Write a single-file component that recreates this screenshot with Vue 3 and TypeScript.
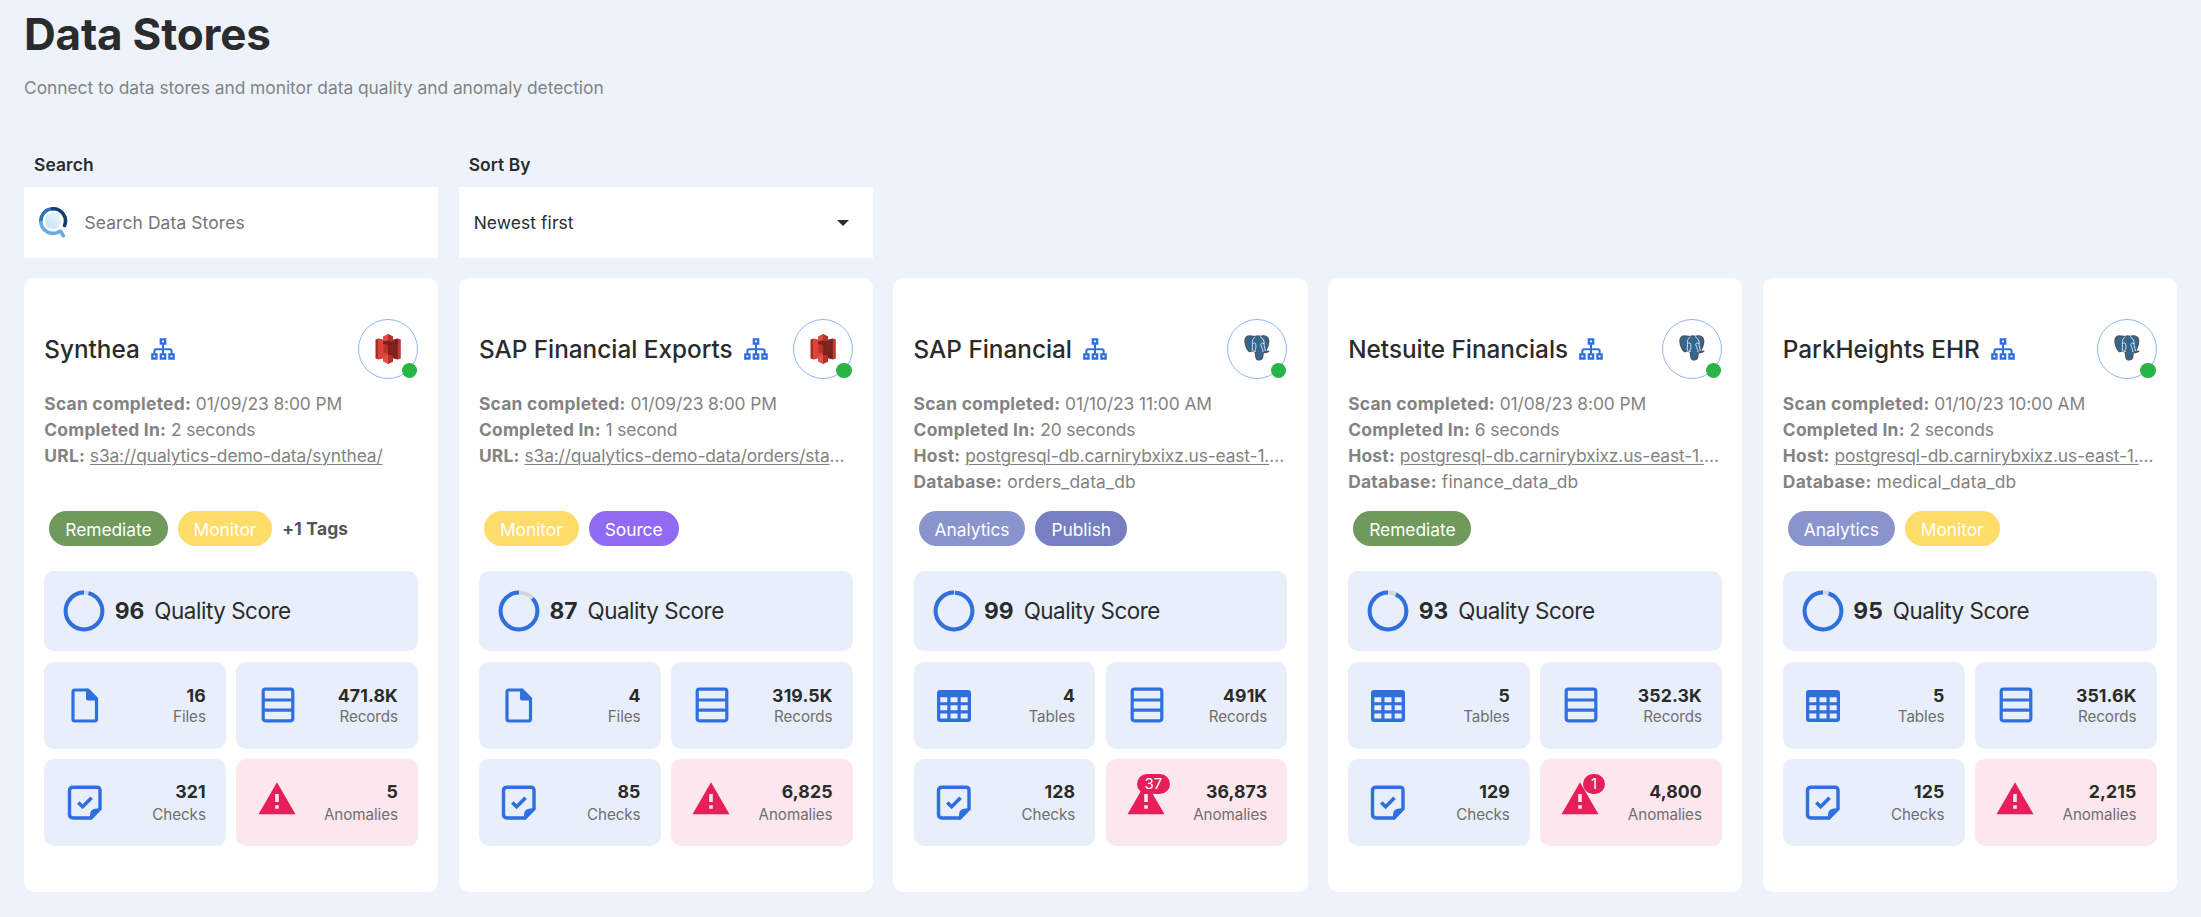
<script setup lang="ts">
interface Tag { label: string; color: string }
interface Store {
  name: string
  kind: 's3' | 'pg'
  scanned: string
  took: string
  address: string
  database?: string
  tags: Tag[]
  more?: string
  score: number
  units: string
  records: string
  checks: string
  anomalies: string
  badge?: string
}

const remediate: Tag = { label: 'Remediate', color: '#6f9a5c' }
const monitor: Tag = { label: 'Monitor', color: '#fddc69' }
const source: Tag = { label: 'Source', color: '#916af3' }
const analytics: Tag = { label: 'Analytics', color: '#8a94cc' }
const publish: Tag = { label: 'Publish', color: '#757fc2' }

const host = 'postgresql-db.carnirybxixz.us-east-1.rds.amazonaws.com'

const stores: Store[] = [
  { name: 'Synthea', kind: 's3', scanned: '01/09/23 8:00 PM', took: '2 seconds', address: 's3a://qualytics-demo-data/synthea/', tags: [remediate, monitor], more: '+1 Tags', score: 96, units: '16', records: '471.8K', checks: '321', anomalies: '5' },
  { name: 'SAP Financial Exports', kind: 's3', scanned: '01/09/23 8:00 PM', took: '1 second', address: 's3a://qualytics-demo-data/orders/staging/', tags: [monitor, source], score: 87, units: '4', records: '319.5K', checks: '85', anomalies: '6,825' },
  { name: 'SAP Financial', kind: 'pg', scanned: '01/10/23 11:00 AM', took: '20 seconds', address: host, database: 'orders_data_db', tags: [analytics, publish], score: 99, units: '4', records: '491K', checks: '128', anomalies: '36,873', badge: '37' },
  { name: 'Netsuite Financials', kind: 'pg', scanned: '01/08/23 8:00 PM', took: '6 seconds', address: host, database: 'finance_data_db', tags: [remediate], score: 93, units: '5', records: '352.3K', checks: '129', anomalies: '4,800', badge: '1' },
  { name: 'ParkHeights EHR', kind: 'pg', scanned: '01/10/23 10:00 AM', took: '2 seconds', address: host, database: 'medical_data_db', tags: [analytics, monitor], score: 95, units: '5', records: '351.6K', checks: '125', anomalies: '2,215' },
]
</script>

<template>
  <main class="page">
    <h1>Data Stores</h1>
    <p class="lead">Connect to data stores and monitor data quality and anomaly detection</p>

    <section class="filters">
      <div class="field">
        <label>Search</label>
        <div class="box">
          <svg class="q" viewBox="0 0 30 32" fill="none">
            <defs>
              <linearGradient id="lens" x1="0" y1="1" x2="1" y2="0">
                <stop offset="0" stop-color="#c3e0f7" /><stop offset="1" stop-color="#edf6fd" />
              </linearGradient>
            </defs>
            <circle cx="14" cy="14" r="8.2" fill="url(#lens)" />
            <path d="M1.9 15.5A12.2 12.2 0 0 1 13.5 1.8" stroke="#2d74b5" stroke-width="3.6" />
            <path d="M13.5 1.8A12.2 12.2 0 0 1 25.6 18.5" stroke="#103f6b" stroke-width="3.6" stroke-linecap="round" />
            <path d="M1.9 15.5A12.2 12.2 0 0 0 19.5 25L21.5 24.2L24.3 28.8" stroke="#68abe3" stroke-width="3.6" stroke-linecap="round" stroke-linejoin="round" />
          </svg>
          <span class="placeholder">Search Data Stores</span>
        </div>
      </div>
      <div class="field">
        <label>Sort By</label>
        <div class="box select">
          <span>Newest first</span>
          <svg class="caret" viewBox="0 0 12 6"><path d="M0 0h12L6 6z" fill="#2b2b2b" /></svg>
        </div>
      </div>
    </section>

    <section class="cards">
      <article v-for="s in stores" :key="s.name" class="card">
        <header>
          <h2>{{ s.name }}</h2>
          <svg class="tree" viewBox="0 0 24 22" fill="none" stroke="#2f6fde" stroke-width="2.3">
            <path d="M9.800 1.300h4.400v4.200H9.800zM1.300 16.3h4.200v4.200H1.300zM9.800 16.3h4.400v4.200H9.800zM18.400 16.3h4.200v4.200h-4.200z" />
            <path d="M12 5.500v10.700M3.400 16.2v-3.400q0-1.600 1.600-1.600h14q1.600 0 1.600 1.600v3.400" stroke-width="2" />
          </svg>
          <div class="avatar">
            <svg v-if="s.kind === 's3'" class="s3" viewBox="0 0 26 30">
              <path d="M.5 5.600L3.500 4.600L13 7v16l-9.500 2.400-3-1z" fill="#a52f28" />
              <path d="M3 4.700L13 7.500v15L3 25.300z" fill="#dc443a" />
              <path d="M25.500 5.600l-3-1L13 7v16l9.500 2.400 3-1z" fill="#7c231d" />
              <path d="M22.800 4.700l2.700.9v18.800l-2.700.9z" fill="#c23a32" />
              <path d="M13 0l5 2.500v4.600L13 8.500 8 7.100V2.500z" fill="#e04a40" />
              <path d="M13 0l5 2.500v4.600l-5 1.400z" fill="#b5322c" />
              <path d="M8 7.500l5-1 5 1v2.700l-5 .8-5-.8z" fill="#7c231d" />
              <path d="M8.500 11.500l4.500-.7 4.500.7v7l-4.500.7-4.500-.7z" fill="#b5322c" />
              <path d="M13 10.800l4.500.7v7l-4.500.7z" fill="#7c231d" />
              <path d="M13 21l5 1v5.500L13 30l-5-2.500V22z" fill="#e0524a" />
              <path d="M13 21l5 1v5.500L13 30z" fill="#b5322c" />
            </svg>
            <svg v-else class="pg" viewBox="0 0 26 26" stroke-linejoin="round" stroke-linecap="round">
              <path d="M7 1.200C3 .5.900 2.300 1 6c.1 3.500 2 9.200 4.200 10.500 1.100.6 2-.3 2.800-1.200.8 1.200 1.900 1.600 3.400 1.500.3 2.700 0 5.300 1.100 7 1 1.500 4.500 1.600 5.700-.3.700-1.300.8-4.300 1-6.300 2 .5 4.300 0 5.500-1-1 .2-2.300.3-3-.4C24.500 11 25.600 5 23.500 2.500 21.500.4 18 .6 16.300 1.400c-2-.7-3.900-.6-5.300.2C9.800 1.100 8.300 1.200 7 1.200z" fill="#336791" stroke="#50555a" stroke-width="1.4" />
              <path d="M11 2C8 4 8.300 7.500 8.500 9.500c.2 2-.5 3.500-.3 5.500M8.600 8.500c1.500-1.200 3.300-.6 3.200 1.200-.1 2 .8 3.500-1 5.800M16.300 1.700c3 2 4.200 4.500 3.800 7.300-.2 2 .7 3.500 1.300 6.700M19.800 8.500c-1.500-1-3.300-.4-3 1.300.3 1.800 1.800 3.300 2.200 7M8.500 15.300q1 1.600 3 1.200" fill="none" stroke="#d9e3ec" stroke-width="1" />
            </svg>
            <i class="dot"></i>
          </div>
        </header>

        <div class="info">
          <p><b>Scan completed:</b> {{ s.scanned }}</p>
          <p><b>Completed In:</b> {{ s.took }}</p>
          <p><b>{{ s.database ? 'Host:' : 'URL:' }}</b>&nbsp;<u>{{ s.address }}</u></p>
          <p v-if="s.database" class="db"><b>Database:</b> {{ s.database }}</p>
        </div>

        <div class="tags">
          <span v-for="t in s.tags" :key="t.label" class="tag" :style="{ background: t.color }">{{ t.label }}</span>
          <strong v-if="s.more">{{ s.more }}</strong>
        </div>

        <div class="quality">
          <svg class="ring" viewBox="0 0 42 42" fill="none" stroke-width="4">
            <circle cx="21" cy="21" r="18.4" stroke="#d3d6db" />
            <circle cx="21" cy="21" r="18.4" stroke="#2f6fde" pathLength="100" :stroke-dasharray="`${s.score} 100`" transform="matrix(0 -1 -1 0 42 42)" />
          </svg>
          <b>{{ s.score }}</b><span>Quality Score</span>
        </div>

        <div class="tiles">
          <div class="tile">
            <svg v-if="s.kind === 's3'" class="icon" viewBox="0 0 40 40">
              <path d="M9.500 4h13l9 9v20q0 2-2 2H10q-2 0-2-2V6q0-2 1.500-2z" fill="none" stroke="#2f6fde" stroke-width="3.2" />
              <path d="M21 2.800h3L33 12V14.500H23q-2 0-2-2z" fill="#2f6fde" />
            </svg>
            <svg v-else class="icon" viewBox="0 0 40 40">
              <path fill="#2f6fde" fill-rule="evenodd" d="M6 4h28q3 0 3 3v26q0 3-3 3H6q-3 0-3-3V7q0-3 3-3zM6.300 11.300v5h7v-5zM16.500 11.300v5h7v-5zM26.700 11.300v5h7v-5zM6.300 19.300v5h7v-5zM16.500 19.300v5h7v-5zM26.700 19.300v5h7v-5zM6.300 27.500v5h7v-5zM16.500 27.500v5h7v-5zM26.700 27.500v5h7v-5z" />
            </svg>
            <div class="figure"><b>{{ s.units }}</b><span>{{ s.kind === 's3' ? 'Files' : 'Tables' }}</span></div>
          </div>
          <div class="tile">
            <svg class="icon" viewBox="0 0 40 40" fill="none" stroke="#2f6fde" stroke-width="3.2">
              <rect x="6.2" y="3.2" width="29.6" height="31.6" rx="2.2" />
              <path d="M6 14h30M6 24.200h30" />
            </svg>
            <div class="figure"><b>{{ s.records }}</b><span>Records</span></div>
          </div>
          <div class="tile low">
            <svg class="icon" viewBox="0 0 40 40" fill="none" stroke="#2f6fde" stroke-width="3.4">
              <path d="M8 5.300h24q3 0 3 3v18.500L26 36H8q-3.500 0-3.500-3.500V8.500Q4.500 5.300 8 5.300z" />
              <path d="M36.700 26.500L26.500 37.500h-1.500v-4.500q0-6.500 6.500-6.500z" fill="#2f6fde" stroke="none" />
              <path d="M13.300 20.500l4.300 4.300 9-9" stroke-width="3.6" />
            </svg>
            <div class="figure"><b>{{ s.checks }}</b><span>Checks</span></div>
          </div>
          <div class="tile low alert">
            <div class="icon">
              <svg viewBox="0 0 40 40"><path fill="#e61e5a" fill-rule="evenodd" d="M20 .3L38.500 32.300H1.500zM18.200 12v8h3.600v-8zM18.200 23.200v3.600h3.600v-3.600z" /></svg>
              <em v-if="s.badge">{{ s.badge }}</em>
            </div>
            <div class="figure"><b>{{ s.anomalies }}</b><span>Anomalies</span></div>
          </div>
        </div>
      </article>
    </section>
  </main>
</template>

<style>
body { background: #eef3fb; }
</style>

<style scoped>
* { box-sizing: border-box; }
.page {
  height: 917px;
  padding: 0 24px;
  overflow: hidden;
  background: #eef3fb;
  color: #2b2b2b;
  font: 17.4px/26.3px Inter, "Liberation Sans", sans-serif;
}
h1, h2, p { margin: 0; }
h1 { padding-top: 8px; font-size: 44px; line-height: 52px; font-weight: 700; letter-spacing: -0.2px; }
.lead { margin-top: 14px; line-height: 28px; color: #838383; letter-spacing: -.04px; }
.filters { display: flex; gap: 20.25px; margin-top: 49px; }
.field { width: 414.4px; }
label { display: block; height: 36px; padding-left: 10px; line-height: 28px; font-weight: 600; letter-spacing: .1px; }
.box { display: flex; align-items: center; height: 71px; padding: 0 14.5px; background: #fff; letter-spacing: .12px; }
.q { width: 30px; height: 32px; }
.placeholder { margin-left: 16px; padding-top: 1px; color: #757575; }
.select { justify-content: space-between; padding: 0 24.5px 0 15px; letter-spacing: .1px; }
.select span { padding-top: 1px; }
.caret { width: 12px; height: 6px; }

.cards { display: grid; grid-template-columns: repeat(5, minmax(0, 1fr)); gap: 20.25px; margin-top: 20px; }
.card { height: 614px; padding: 41px 20.25px 0; border-radius: 10px; background: #fff; }
header { display: flex; align-items: center; height: 60px; }
h2 { margin-top: -1px; font-size: 24.3px; line-height: 32px; font-weight: 500; white-space: nowrap; }
.tree { width: 24px; height: 22px; margin: -1px 0 0 11px; }
.avatar { position: relative; display: grid; place-items: center; width: 60px; height: 60px; margin-left: auto; border: 1px solid #94b5f1; border-radius: 50%; }
.s3 { width: 26px; height: 30px; }
.pg { width: 26px; height: 26px; margin-top: -3px; }
.dot { position: absolute; right: 0; bottom: 0; width: 15.4px; height: 15.4px; border-radius: 50%; background: #28b446; }

.info { height: 106px; margin-top: 11.5px; color: #838383; letter-spacing: -.1px; }
.info p { overflow: hidden; white-space: nowrap; text-overflow: ellipsis; }
.info b { font-weight: 700; letter-spacing: .25px; }
.info .db { letter-spacing: .16px; }
u { text-underline-offset: 2px; text-decoration-thickness: 1.3px; letter-spacing: -.14px; }

.tags { display: flex; align-items: center; gap: 10px; height: 35.4px; margin: 14px 0 0 5px; }
.tag { height: 35.4px; padding: 1px 16px 0; border-radius: 18px; line-height: 36px; color: #fff; letter-spacing: -.05px; }
strong { padding-top: 2px; font-weight: 700; color: #555; letter-spacing: .2px; }

.quality { display: flex; align-items: center; height: 80.5px; margin-top: 25px; padding-left: 19px; border-radius: 10px; background: #e8effb; font-size: 22.8px; }
.ring { width: 42px; height: 42px; }
.quality b { margin: 0 10px 0 9.5px; font-weight: 700; }
.quality span { font-size: 22.4px; letter-spacing: -.45px; }

.tiles { display: grid; grid-template-columns: 1fr 1fr; gap: 10.2px; margin-top: 10.3px; }
.tile { display: flex; justify-content: space-between; height: 87px; padding: 24.5px 20.25px 0; border-radius: 10px; background: #e8effb; }
.alert { background: #fde7ee; }
.icon { position: relative; width: 40px; height: 40px; }
.figure { display: flex; flex-direction: column; text-align: right; }
.figure b { line-height: 20px; font-size: 17.7px; font-weight: 700; letter-spacing: .1px; }
.figure span { line-height: 22px; font-size: 15.2px; color: #6f6f6f; letter-spacing: -.07px; }
.tile.low { padding-top: 23px; }
.low .figure { gap: 1.5px; padding-top: .5px; }
em { position: absolute; right: -4.5px; top: -8px; height: 20px; padding: 0 8px; border-radius: 10px; background: #e61e5a; color: #fff; font-size: 15px; line-height: 20px; font-style: normal; }
</style>
